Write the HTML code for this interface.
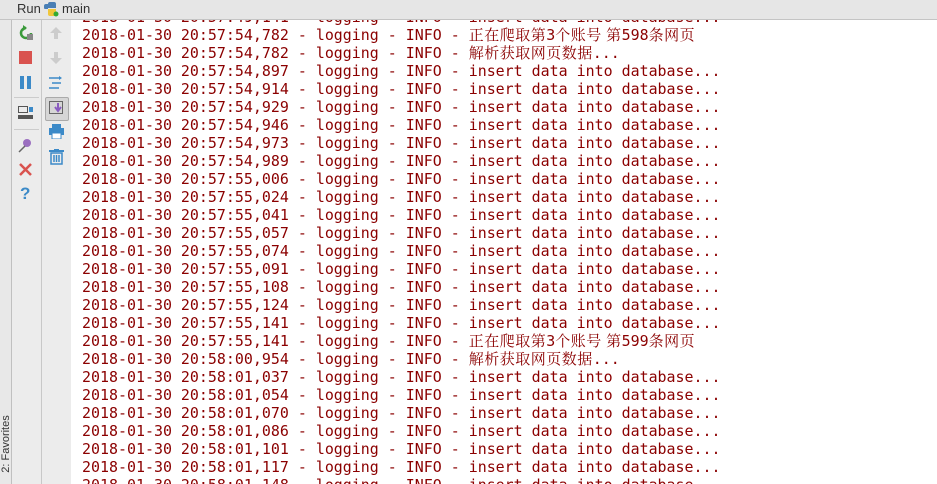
<!DOCTYPE html>
<html><head><meta charset="utf-8"><style>
html,body{margin:0;padding:0;width:937px;height:484px;overflow:hidden;background:#fff;position:relative;font-family:"Liberation Sans",sans-serif}
#hdr{position:absolute;z-index:5;left:0;top:0;width:937px;height:19px;background:#e6e6e6;border-bottom:1px solid #c4c4c4;font-size:13px;color:#333}
#fav{position:absolute;left:0;top:20px;width:11px;height:464px;background:#e8e8e8;border-right:1px solid #c0c0c0;overflow:hidden}
#tb1{position:absolute;left:12px;top:20px;width:29px;height:464px;background:#ececec;border-right:1px solid #c8c8c8}
#tb2{position:absolute;left:42px;top:20px;width:29px;height:464px;background:#ececec}
#out{position:absolute;left:82px;top:8px;font-family:"DejaVu Sans Mono","Noto Serif CJK SC",monospace;font-size:14.95px;line-height:18px;color:#8b0000;white-space:pre}
.c{font-family:"Noto Serif CJK SC","DejaVu Sans Mono",serif;font-size:15px;letter-spacing:0.5px}
svg{position:absolute}
</style></head><body>
<div id="hdr"><span style="position:absolute;left:17px;top:1px">Run</span>
<svg style="left:43px;top:1px" width="16" height="16"><path d="M7 1h4a2 2 0 0 1 2 2v4H5v1H2a1 1 0 0 1-1-1V5a2 2 0 0 1 2-2h2V3a2 2 0 0 1 2-2z" fill="#4a7fb5"/><path d="M5 8h8v5a2 2 0 0 1-2 2H7a2 2 0 0 1-2-2z" fill="#f0c63a"/><circle cx="13" cy="13" r="2.5" fill="#3a3"/></svg>
<span style="position:absolute;left:62px;top:1px">main</span></div>
<div id="fav"><span style="position:absolute;left:-29px;top:418px;width:70px;text-align:center;transform:rotate(-90deg);font-size:11px;line-height:12px;color:#333;white-space:nowrap">2: Favorites</span></div>
<div id="tb1"></div><div id="tb2"></div>
<svg style="left:17px;top:25px" width="18" height="16"><path d="M9 3a5 5 0 1 0 5 5" stroke="#3a9a3a" stroke-width="2.5" fill="none"/><path d="M6 0l4 3-4 3z" fill="#3a9a3a"/><rect x="10" y="9" width="6" height="6" fill="#888"/></svg>
<div style="position:absolute;left:19px;top:51px;width:13px;height:13px;background:#d9534f"></div>
<div style="position:absolute;left:20px;top:76px;width:4px;height:13px;background:#3c8ac8"></div><div style="position:absolute;left:27px;top:76px;width:4px;height:13px;background:#3c8ac8"></div>
<div style="position:absolute;left:14px;top:97px;width:25px;height:1px;background:#ccc"></div>
<svg style="left:18px;top:106px" width="16" height="14"><rect x="0.5" y="0.5" width="9" height="6" fill="none" stroke="#555"/><rect x="11" y="1" width="4" height="5" fill="#3c8ac8"/><rect x="0" y="9" width="15" height="4" fill="#555"/></svg>
<div style="position:absolute;left:14px;top:129px;width:25px;height:1px;background:#ccc"></div>
<svg style="left:17px;top:137px" width="16" height="16"><circle cx="10" cy="6" r="4" fill="#9b6fc0"/><path d="M2 15l6-6" stroke="#666" stroke-width="1.5"/></svg>
<svg style="left:19px;top:163px" width="13" height="13"><path d="M1 1l11 11M12 1L1 12" stroke="#d9534f" stroke-width="2.5"/></svg>
<span style="position:absolute;left:20px;top:184px;color:#3c8ac8;font-weight:bold;font-size:17px">?</span>
<svg style="left:49px;top:26px" width="14" height="14"><path d="M7 1l6 6H9v6H5V7H1z" fill="#ccc"/></svg>
<svg style="left:49px;top:51px" width="14" height="14"><path d="M7 13l6-6H9V1H5v6H1z" fill="#ccc"/></svg>
<svg style="left:48px;top:75px" width="16" height="16"><path d="M1 3h10M4 8h9M1 13h10" stroke="#3c8ac8" stroke-width="1.5"/><path d="M11 1l3 2-3 2z" fill="#3c8ac8"/></svg>
<div style="position:absolute;left:45px;top:97px;width:22px;height:22px;background:#d6d6d6;border:1px solid #aaa;border-radius:2px"></div>
<svg style="left:49px;top:101px" width="16" height="14"><rect x="0.5" y="0.5" width="13" height="12" fill="none" stroke="#666"/><path d="M9 2v7M6 6l3 4 3-4" stroke="#8a5cc0" stroke-width="2" fill="none"/></svg>
<svg style="left:49px;top:124px" width="15" height="15"><rect x="3" y="0" width="9" height="4" fill="#3c8ac8"/><rect x="0" y="4" width="15" height="7" fill="#3c8ac8"/><rect x="3" y="9" width="9" height="6" fill="#fff" stroke="#3c8ac8"/></svg>
<svg style="left:49px;top:149px" width="15" height="16"><rect x="0" y="1" width="15" height="2" fill="#3c8ac8"/><rect x="5" y="0" width="5" height="2" fill="#3c8ac8"/><path d="M2 4h11v11H2z M5 6v7M7.5 6v7M10 6v7" stroke="#3c8ac8" stroke-width="1.5" fill="none"/></svg>
<div id="out">2018-01-30 20:57:49,141 - logging - INFO - insert data into database...
2018-01-30 20:57:54,782 - logging - INFO - <span class="c">正在爬取第</span>3<span class="c">个账号 第</span>598<span class="c">条网页</span>
2018-01-30 20:57:54,782 - logging - INFO - <span class="c">解析获取网页数据</span>...
2018-01-30 20:57:54,897 - logging - INFO - insert data into database...
2018-01-30 20:57:54,914 - logging - INFO - insert data into database...
2018-01-30 20:57:54,929 - logging - INFO - insert data into database...
2018-01-30 20:57:54,946 - logging - INFO - insert data into database...
2018-01-30 20:57:54,973 - logging - INFO - insert data into database...
2018-01-30 20:57:54,989 - logging - INFO - insert data into database...
2018-01-30 20:57:55,006 - logging - INFO - insert data into database...
2018-01-30 20:57:55,024 - logging - INFO - insert data into database...
2018-01-30 20:57:55,041 - logging - INFO - insert data into database...
2018-01-30 20:57:55,057 - logging - INFO - insert data into database...
2018-01-30 20:57:55,074 - logging - INFO - insert data into database...
2018-01-30 20:57:55,091 - logging - INFO - insert data into database...
2018-01-30 20:57:55,108 - logging - INFO - insert data into database...
2018-01-30 20:57:55,124 - logging - INFO - insert data into database...
2018-01-30 20:57:55,141 - logging - INFO - insert data into database...
2018-01-30 20:57:55,141 - logging - INFO - <span class="c">正在爬取第</span>3<span class="c">个账号 第</span>599<span class="c">条网页</span>
2018-01-30 20:58:00,954 - logging - INFO - <span class="c">解析获取网页数据</span>...
2018-01-30 20:58:01,037 - logging - INFO - insert data into database...
2018-01-30 20:58:01,054 - logging - INFO - insert data into database...
2018-01-30 20:58:01,070 - logging - INFO - insert data into database...
2018-01-30 20:58:01,086 - logging - INFO - insert data into database...
2018-01-30 20:58:01,101 - logging - INFO - insert data into database...
2018-01-30 20:58:01,117 - logging - INFO - insert data into database...
2018-01-30 20:58:01,148 - logging - INFO - insert data into database...</div>
</body></html>
